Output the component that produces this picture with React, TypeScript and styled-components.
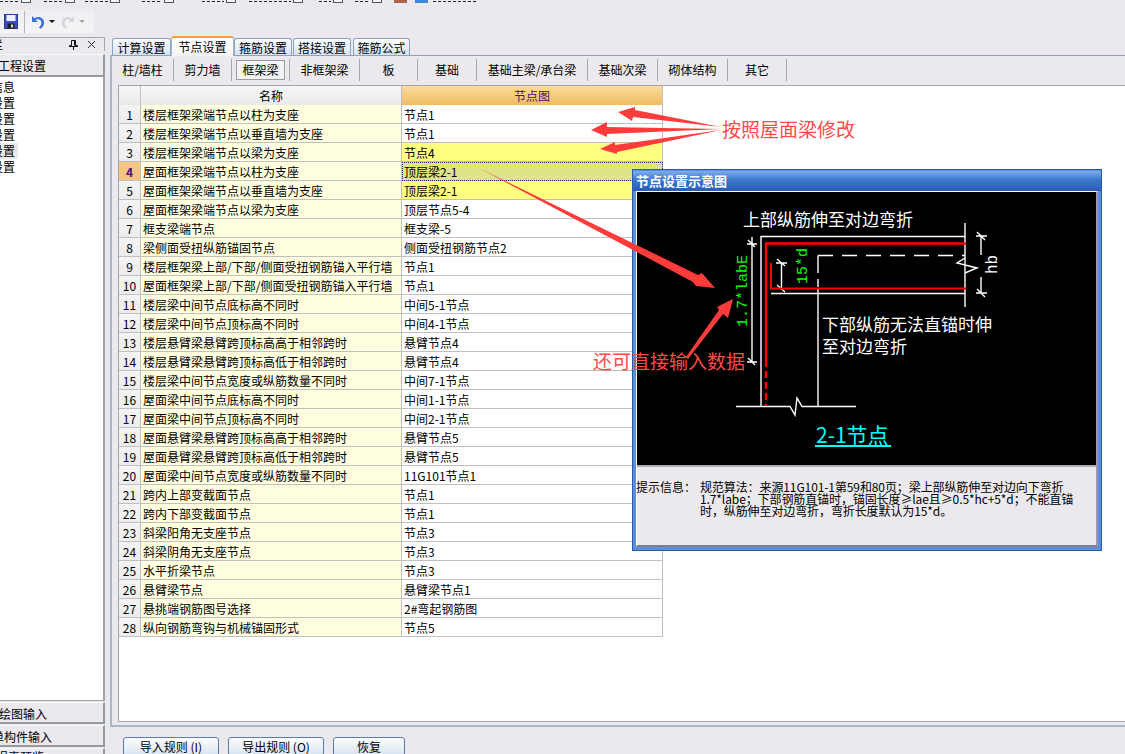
import React from "react";
import styled, { createGlobalStyle, css } from "styled-components";

const GlobalStyle = createGlobalStyle`
  html, body { margin: 0; padding: 0; background: #ebe9ed; }
  body { font-family: "Noto Sans CJK SC", "Liberation Sans", sans-serif; font-size: 12px; color: #000; }
  * { box-sizing: border-box; }
`;

const Root = styled.div`
  position: relative;
  width: 1125px;
  height: 754px;
  overflow: hidden;
  background: #ebe9ed;
  display: flex;
  flex-direction: column;
`;

const MenuStrip = styled.div`
  height: 3px;
  margin-bottom: 7px;
  overflow: hidden;
  display: flex;
  align-items: flex-end;
`;
const MenuLabel = styled.span<{ $x: number; $w: number }>`
  margin-left: ${(p) => p.$x}px;
  width: ${(p) => p.$w}px;
  height: 3px;
  overflow: hidden;
  line-height: 3px;
  white-space: nowrap;
  display: block;
  position: relative;
  &::before {
    content: "";
    display: block;
    height: 1px;
    margin-top: 1px;
    background: repeating-linear-gradient(90deg, #222 0 3px, transparent 3px 5px);
  }
`;
const MenuBox = styled.span`
  width: 10px;
  height: 3px;
  margin-left: 2px;
  border: 1px solid #555;
  border-top: 0;
  background: #f6f6f6;
`;
const MenuIcon = styled.span<{ $c: string; $x: number }>`
  width: 13px;
  height: 3px;
  margin-left: ${(p) => p.$x}px;
  background: ${(p) => p.$c};
`;

const Toolbar = styled.div`
  width: 94px;
  height: 23px;
  margin-bottom: 3px;
  display: flex;
  align-items: center;
  background: linear-gradient(#eeedf0, #f5f4f7);
  border-radius: 0 3px 3px 0;
`;
const ToolSave = styled.div`
  width: 24px;
  padding-left: 4px;
  display: flex;
`;
const ToolSep = styled.div`
  width: 1px;
  height: 22px;
  background: #b4b4b8;
  margin-right: 6px;
`;
const ToolIcon = styled.div<{ $w: number }>`
  width: ${(p) => p.$w}px;
  display: flex;
  align-items: center;
`;
const Caret = styled.div<{ $muted?: boolean }>`
  width: 0;
  height: 0;
  border-left: 3px solid transparent;
  border-right: 3px solid transparent;
  border-top: 3px solid ${(p) => (p.$muted ? "#a8a8a8" : "#111")};
`;

const Workspace = styled.div`
  flex: 1;
  min-height: 0;
  display: flex;
`;

const Sidebar = styled.aside`
  width: 105px;
  margin-right: 5px;
  display: flex;
  flex-direction: column;
  padding-top: 1px;
`;
const SideHeader = styled.div`
  height: 14px;
  margin-bottom: 3px;
  display: flex;
  align-items: center;
  border-top: 1px solid #a8a8ac;
  border-right: 1px solid #a8a8ac;
  overflow: hidden;
`;
const SideTitle = styled.span`
  margin-left: -9px;
  width: 72px;
  flex: none;
  line-height: 12px;
`;
const SideGlyph = styled.span`
  width: 16px;
  flex: none;
  display: flex;
  justify-content: center;
  margin-left: 2px;
`;
const SideButton = styled.div<{ $h?: number; $tall?: boolean; $cut?: boolean }>`
  height: ${(p) => p.$h ?? 22}px;
  flex: none;
  display: flex;
  align-items: ${(p) => (p.$cut ? "flex-start" : "center")};
  padding-top: ${(p) => (p.$cut ? 2 : 1)}px;
  line-height: ${(p) => (p.$cut ? "12px" : "normal")};
  background: #ebe9ed;
  border-top: 1px solid #f8f8f8;
  border-right: 2px solid #9a9a9e;
  border-bottom: ${(p) => (p.$cut ? 0 : 2)}px solid #9a9a9e;
  white-space: nowrap;
  overflow: hidden;
  ${(p) =>
    p.$tall &&
    css`
      margin-bottom: 1px;
    `}
`;
const SideButtonText = styled.span<{ $x: number }>`
  margin-left: ${(p) => p.$x}px;
  flex: none;
`;
const SideList = styled.div`
  flex: 1;
  min-height: 0;
  background: #fff;
  border-right: 2px solid #a3a3a7;
  border-bottom: 1px solid #a3a3a7;
  padding-top: 2px;
  margin-bottom: 1px;
`;
const SideItem = styled.div<{ $on?: boolean }>`
  width: 18px;
  height: 16px;
  line-height: 16px;
  overflow: hidden;
  background: ${(p) => (p.$on ? "#e9e9e9" : "transparent")};
  white-space: nowrap;
`;
const SideItemText = styled.span`
  display: block;
  margin-left: -9px;
`;

const Main = styled.main`
  flex: 1;
  min-width: 0;
  display: flex;
  flex-direction: column;
`;
const TabRow = styled.div`
  height: 19px;
  padding-left: 2px;
  display: flex;
  align-items: flex-end;
  flex: none;
`;
const Tab = styled.div<{ $on?: boolean; $w: number; $gap?: number }>`
  width: ${(p) => p.$w}px;
  margin-right: ${(p) => p.$gap ?? 0}px;
  text-align: center;
  white-space: nowrap;
  ${(p) =>
    p.$on
      ? css`
          height: 20px;
          line-height: 18px;
          background: linear-gradient(#fff, #f4f4f6);
          border-top: 2px solid #f0a030;
          border-left: 1px solid #a5b4c8;
          border-right: 1px solid #a5b4c8;
          margin-bottom: -1px;
          position: relative;
          z-index: 1;
          border-radius: 3px 3px 0 0;
        `
      : css`
          height: 17px;
          line-height: 17px;
          background: linear-gradient(#fbfcfe, #d7e4f4);
          border: 1px solid #8da2bd;
          border-bottom: 0;
          border-radius: 3px 3px 0 0;
        `}
`;
const Panel = styled.div`
  height: 672px;
  flex: none;
  border-top: 1px solid #8fa2b9;
  border-left: 2px solid #a7b6c9;
  border-bottom: 2px solid #a7b6c9;
  display: flex;
  flex-direction: column;
`;
const SubBar = styled.div`
  height: 29px;
  flex: none;
  padding: 3px 0 0 0;
  display: flex;
`;
const SubTab = styled.div<{ $w: number }>`
  width: ${(p) => p.$w}px;
  height: 22px;
  flex: none;
  padding: 1px 4px;
  border-right: 1px solid #a9a9ad;
  display: flex;
`;
const SubTabText = styled.div<{ $on?: boolean }>`
  flex: 1;
  line-height: 18px;
  text-align: center;
  white-space: nowrap;
  border: 1px solid ${(p) => (p.$on ? "#9c9ca0" : "transparent")};
  background: ${(p) => (p.$on ? "#f3f3f3" : "transparent")};
`;
const Sheet = styled.div`
  flex: 1;
  min-height: 0;
  margin: 0 0 3px 6px;
  background: #fff;
  border: 1px solid #a5a5a9;
  border-right: 0;
`;
const Table = styled.div`
  display: grid;
  grid-template-columns: 22px 261px 261px;
  grid-auto-rows: 19px;
  width: 544px;
`;
const cellBase = css`
  border-right: 1px solid #c0c0c0;
  border-bottom: 1px solid #c0c0c0;
  white-space: nowrap;
  overflow: hidden;
  line-height: 20px;
`;
const HeadCell = styled.div<{ $accent?: boolean }>`
  ${cellBase}
  height: 20px;
  line-height: 19px;
  text-align: center;
  color: ${(p) => (p.$accent ? "#4b0a80" : "#000")};
  background: ${(p) =>
    p.$accent ? "linear-gradient(#fbdc9c, #efbb62)" : "linear-gradient(#f7f7f7, #e9e9e9)"};
`;
const IndexCell = styled.div<{ $on?: boolean }>`
  ${cellBase}
  text-align: center;
  color: ${(p) => (p.$on ? "#4b0a80" : "#000")};
  font-weight: ${(p) => (p.$on ? 700 : 400)};
  background: ${(p) => (p.$on ? "#f6c57f" : "linear-gradient(#f4f4f4, #ececec)")};
`;
const NameCell = styled.div`
  ${cellBase}
  padding-left: 2px;
  background: #ffffe0;
`;
const ValueCell = styled.div<{ $tone?: "yellow" | "focus" }>`
  ${cellBase}
  padding-left: 2px;
  background: ${(p) =>
    p.$tone === "yellow" ? "#ffff80" : p.$tone === "focus" ? "#e0e488" : "#fff"};
  ${(p) =>
    p.$tone === "focus" &&
    css`
      outline: 1px dotted #20208a;
      outline-offset: -1px;
    `}
`;
const Footer = styled.div`
  padding: 10px 0 0 13px;
  display: flex;
  gap: 9px;
`;
const FootButton = styled.div<{ $w: number }>`
  width: ${(p) => p.$w}px;
  height: 30px;
  flex: none;
  text-align: center;
  line-height: 17px;
  border: 1px solid #5c7ca8;
  border-radius: 3px;
  background: linear-gradient(#fefefe, #d8e3f1 60%);
  white-space: nowrap;
`;

/* floats above the grid, like the real window does */
const DialogWindow = styled.div`
  position: absolute;
  left: 632px;
  top: 169px;
  width: 470px;
  height: 382px;
  border: 1px solid #2f5aa8;
  background: #5b8fdc;
  padding: 1px 3px 3px 3px;
  display: flex;
  flex-direction: column;
  z-index: 2;
`;
const DialogTitle = styled.div`
  height: 20px;
  flex: none;
  margin: 0 -3px;
  padding-left: 3px;
  color: #fff;
  font-size: 13px;
  font-weight: 700;
  line-height: 19px;
  background: linear-gradient(#7eaeea, #3a76cf 45%, #2a5cb6);
`;
const DialogBody = styled.div`
  flex: 1;
  min-height: 0;
  background: #ebe9ed;
  border-top: 1px solid #fff;
  border-right: 2px solid #9c9ca0;
  border-bottom: 2px solid #808084;
  border-left: 1px solid #fff;
  display: flex;
  flex-direction: column;
`;
const Canvas = styled.svg`
  display: block;
  width: 100%;
  height: 273px;
  flex: none;
  background: #000;
`;
const InfoBar = styled.div`
  flex: 1;
  border-top: 2px solid #b0b0b0;
  padding: 14px 0 0 0;
  display: flex;
  line-height: 12px;
  font-size: 12px;
`;
const InfoLabel = styled.div`
  width: 64px;
  margin-left: -1px;
  flex: none;
  white-space: nowrap;
`;
const InfoLine = styled.div`
  white-space: nowrap;
  letter-spacing: -0.1px;
`;

const Overlay = styled.svg`
  position: absolute;
  left: 0;
  top: 0;
  width: 1125px;
  height: 754px;
  pointer-events: none;
  z-index: 3;
`;
const Note = styled.div<{ $x: number; $y: number }>`
  position: absolute;
  left: ${(p) => p.$x}px;
  top: ${(p) => p.$y}px;
  font-size: 19px;
  line-height: 22px;
  color: #ff4a4a;
  white-space: nowrap;
  z-index: 4;
`;

const menu: [number, number][] = [
  [0, 19],
  [13, 19],
  [10, 23],
  [22, 20],
  [28, 22],
  [13, 42],
  [16, 12],
  [12, 15],
];

const rows: [string, string, ("yellow" | "focus")?][] = [
  ["楼层框架梁端节点以柱为支座", "节点1"],
  ["楼层框架梁端节点以垂直墙为支座", "节点1"],
  ["楼层框架梁端节点以梁为支座", "节点4", "yellow"],
  ["屋面框架梁端节点以柱为支座", "顶层梁2-1", "focus"],
  ["屋面框架梁端节点以垂直墙为支座", "顶层梁2-1", "yellow"],
  ["屋面框架梁端节点以梁为支座", "顶层节点5-4"],
  ["框支梁端节点", "框支梁-5"],
  ["梁侧面受扭纵筋锚固节点", "侧面受扭钢筋节点2"],
  ["楼层框架梁上部/下部/侧面受扭钢筋锚入平行墙", "节点1"],
  ["屋面框架梁上部/下部/侧面受扭钢筋锚入平行墙", "节点1"],
  ["楼层梁中间节点底标高不同时", "中间5-1节点"],
  ["楼层梁中间节点顶标高不同时", "中间4-1节点"],
  ["楼层悬臂梁悬臂跨顶标高高于相邻跨时", "悬臂节点4"],
  ["楼层悬臂梁悬臂跨顶标高低于相邻跨时", "悬臂节点4"],
  ["楼层梁中间节点宽度或纵筋数量不同时", "中间7-1节点"],
  ["屋面梁中间节点底标高不同时", "中间1-1节点"],
  ["屋面梁中间节点顶标高不同时", "中间2-1节点"],
  ["屋面悬臂梁悬臂跨顶标高高于相邻跨时", "悬臂节点5"],
  ["屋面悬臂梁悬臂跨顶标高低于相邻跨时", "悬臂节点5"],
  ["屋面梁中间节点宽度或纵筋数量不同时", "11G101节点1"],
  ["跨内上部变截面节点", "节点1"],
  ["跨内下部变截面节点", "节点1"],
  ["斜梁阳角无支座节点", "节点3"],
  ["斜梁阴角无支座节点", "节点3"],
  ["水平折梁节点", "节点3"],
  ["悬臂梁节点", "悬臂梁节点1"],
  ["悬挑端钢筋图号选择", "2#弯起钢筋图"],
  ["纵向钢筋弯钩与机械锚固形式", "节点5"],
];

const subTabs: [string, number][] = [
  ["柱/墙柱", 62],
  ["剪力墙", 58],
  ["框架梁", 58],
  ["非框架梁", 70],
  ["板", 58],
  ["基础", 59],
  ["基础主梁/承台梁", 111],
  ["基础次梁", 70],
  ["砌体结构", 70],
  ["其它", 59],
];

// drawing coordinates are page pixels, the viewBox shifts them into the canvas
function NodeDrawing() {
  return (
    <Canvas viewBox="637 192 459 273">
      <g stroke="#fff" strokeWidth="1.4" fill="none">
        <path d="M965 236.5H761V406.5" />
        <path d="M965 223V307" />
        <path d="M771 293.5H965" />
        <path d="M818 255.5H965" strokeDasharray="15 9" />
        <path d="M818 255.5V273M818 279V287" />
        <path d="M818 288V406.5" />
        <path d="M736 406.5H790L795 415L797 398L802 406.5H856" />
        <path d="M965 258L957 263L977 268L965 273" />
        <path d="M752 237V362M747 244H757M748 240L755 247M747 362H757M748 358L755 365" />
        <path d="M781.5 263V288M776 263H787M777 259L785 266M777 285L785 292" />
        <path d="M981 235V255M981 277V293M976 236H987M976 293H987M977 232L985 240M977 289L985 297" />
      </g>
      <g stroke="#ff0000" fill="none">
        <path d="M966 243.5H766V360" strokeWidth="2.4" />
        <path d="M766 360V406" strokeWidth="2.4" strokeDasharray="7 4" />
        <path d="M771 263V288.5H966" strokeWidth="2" />
      </g>
      <g fontFamily='"Noto Sans CJK SC", sans-serif' fontSize="17" fill="#fff">
        <text x="743" y="226">上部纵筋伸至对边弯折</text>
        <text x="822" y="331">下部纵筋无法直锚时伸</text>
        <text x="822" y="353">至对边弯折</text>
      </g>
      <g fontFamily='"Liberation Mono", monospace' fontSize="15">
        <text transform="translate(747 327) rotate(-90)" fill="#00ff00">1.7*labE</text>
        <text transform="translate(807 284) rotate(-90)" fill="#00ff00">15*d</text>
        <text transform="translate(997 274) rotate(-90)" fill="#fff" fontSize="16">hb</text>
      </g>
      <text x="816" y="443" fill="#00ffff" fontSize="21" fontFamily='"Noto Sans CJK SC", sans-serif'>2-1节点</text>
      <path d="M815 446H891" stroke="#00ffff" strokeWidth="2" />
    </Canvas>
  );
}

export default function App() {
  return (
    <Root>
      <GlobalStyle />
      <MenuStrip>
        {menu.map(([x, w], i) => (
          <React.Fragment key={i}>
            <MenuLabel $x={x} $w={w} />
            <MenuBox />
          </React.Fragment>
        ))}
        <MenuIcon $c="#a8654a" $x={12} />
        <MenuIcon $c="#3f8ad8" $x={8} />
        <MenuLabel $x={5} $w={43} />
      </MenuStrip>

      <Toolbar>
        <ToolSave>
          <svg width="14" height="15" viewBox="0 0 14 15">
            <rect x="0.5" y="0.5" width="13" height="14" fill="#3b4fc0" stroke="#2b3a90" />
            <rect x="2.5" y="1" width="9" height="6" fill="#eef2ff" />
            <rect x="3.5" y="9.5" width="7" height="5" fill="#222" />
            <rect x="7" y="10.5" width="2" height="3" fill="#ddd" />
          </svg>
        </ToolSave>
        <ToolSep />
        <ToolIcon $w={18}>
          <svg width="14" height="14" viewBox="0 0 14 14">
            <path d="M1 1V7H7L4.6 4.8C7 3.6 10 4.6 10.4 7.4C10.7 9.4 9.4 11.2 7.8 12.6L9.4 13.8C12 12.4 13.6 9.6 13 6.6C12.2 2.6 7.4 0.8 3.4 3.2Z" fill="#3f6fd8" />
          </svg>
        </ToolIcon>
        <ToolIcon $w={12}>
          <Caret />
        </ToolIcon>
        <ToolIcon $w={18}>
          <svg width="14" height="14" viewBox="0 0 14 14">
            <path d="M13 1V7H7L9.4 4.8C7 3.6 4 4.6 3.6 7.4C3.3 9.4 4.6 11.2 6.2 12.6L4.6 13.8C2 12.4 .4 9.6 1 6.6C1.8 2.6 6.6 .8 10.6 3.2Z" fill="#d3d6d8" />
          </svg>
        </ToolIcon>
        <ToolIcon $w={8}>
          <Caret $muted />
        </ToolIcon>
      </Toolbar>

      <Workspace>
        <Sidebar>
          <SideHeader>
            <SideTitle>栏</SideTitle>
            <SideGlyph>
              <svg width="9" height="10" viewBox="0 0 9 10">
                <path d="M2.5 .5H6.5V5.5H8.5V6.5H.5V5.5H2.5ZM4.5 6.5V10M5.5 1V5.5" stroke="#111" fill="none" />
              </svg>
            </SideGlyph>
            <SideGlyph>
              <svg width="9" height="9" viewBox="0 0 9 9">
                <path d="M1 1L8 8M8 1L1 8" stroke="#333" />
              </svg>
            </SideGlyph>
          </SideHeader>
          <SideButton $h={23}>
            <SideButtonText $x={-2}>工程设置</SideButtonText>
          </SideButton>
          <SideList>
            {["信息", "设置", "设置", "设置", "设置", "设置"].map((t, i) => (
              <SideItem key={i} $on={i === 4}>
                <SideItemText>{t}</SideItemText>
              </SideItem>
            ))}
          </SideList>
          <SideButton $tall>
            <SideButtonText $x={-1}>绘图输入</SideButtonText>
          </SideButton>
          <SideButton $tall>
            <SideButtonText $x={-8}>单构件输入</SideButtonText>
          </SideButton>
          <SideButton $h={6} $cut>
            <SideButtonText $x={-4}>报表预览</SideButtonText>
          </SideButton>
        </Sidebar>

        <Main>
          <TabRow>
            <Tab $w={59}>计算设置</Tab>
            <Tab $w={63} $on>节点设置</Tab>
            <Tab $w={58} $gap={1}>箍筋设置</Tab>
            <Tab $w={58} $gap={2}>搭接设置</Tab>
            <Tab $w={57}>箍筋公式</Tab>
          </TabRow>
          <Panel>
            <SubBar>
              {subTabs.map(([label, w]) => (
                <SubTab key={label} $w={w}>
                  <SubTabText $on={label === "框架梁"}>{label}</SubTabText>
                </SubTab>
              ))}
            </SubBar>
            <Sheet>
              <Table>
                <HeadCell />
                <HeadCell>名称</HeadCell>
                <HeadCell $accent>节点图</HeadCell>
                {rows.map(([name, value, tone], i) => (
                  <React.Fragment key={i}>
                    <IndexCell $on={i === 3}>{i + 1}</IndexCell>
                    <NameCell>{name}</NameCell>
                    <ValueCell $tone={tone}>{value}</ValueCell>
                  </React.Fragment>
                ))}
              </Table>
            </Sheet>
          </Panel>
          <Footer>
            <FootButton $w={96}>导入规则 (I)</FootButton>
            <FootButton $w={96}>导出规则 (O)</FootButton>
            <FootButton $w={72}>恢复</FootButton>
          </Footer>
        </Main>
      </Workspace>

      <DialogWindow>
        <DialogTitle>节点设置示意图</DialogTitle>
        <DialogBody>
          <NodeDrawing />
          <InfoBar>
            <InfoLabel>提示信息：</InfoLabel>
            <div>
              <InfoLine>规范算法：来源11G101-1第59和80页；梁上部纵筋伸至对边向下弯折</InfoLine>
              <InfoLine>1.7*labe；下部钢筋直锚时，锚固长度≥lae且≥0.5*hc+5*d；不能直锚</InfoLine>
              <InfoLine>时，纵筋伸至对边弯折，弯折长度默认为15*d。</InfoLine>
            </div>
          </InfoBar>
        </DialogBody>
      </DialogWindow>

      <Overlay viewBox="0 0 1125 754">
        <g fill="#ff3c3c">
          <polygon points="721,127 635,110 635,107 618,112 632,121 633,117" />
          <polygon points="721,129 607,127 607,122 591,130 607,137 607,134" />
          <polygon points="721,130 615,145 615,142 600,149 617,154 617,152" />
          <polygon points="479,168 698,275 702,273 715,288 696,286 693,282" />
          <polygon points="686,357 719,310 717,307 733,299 728,318 723,314 688,359" />
        </g>
      </Overlay>
      <Note $x={722} $y={118}>按照屋面梁修改</Note>
      <Note $x={593} $y={350}>还可直接输入数据</Note>
    </Root>
  );
}
